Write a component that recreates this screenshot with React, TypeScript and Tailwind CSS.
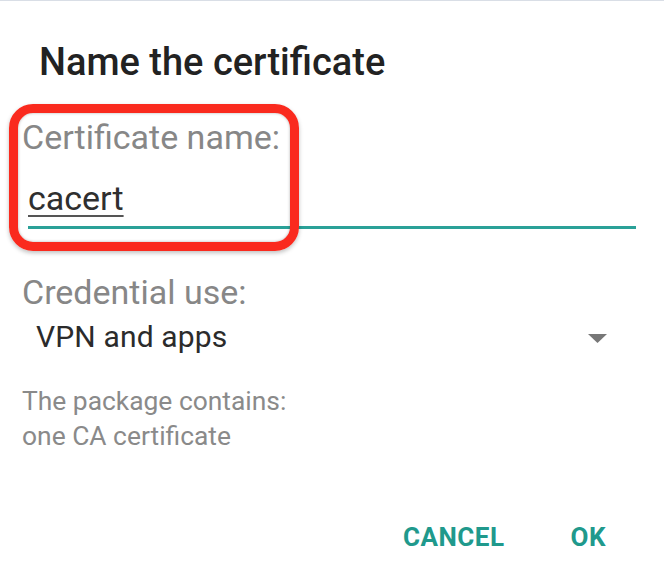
import React from "react";

export default function App() {
  return (
    <div className="relative w-[664px] h-[582px] bg-white border-t border-[#d9dee6] font-['Roboto',_'Noto_Sans',_sans-serif] overflow-hidden">
      <div className="pt-[39px] pl-[39px] text-[38px] leading-[45px] font-medium text-[#222222]">
        Name the certificate
      </div>
      <div className="mt-[32px] pl-[22px] text-[34px] leading-[40px] text-[#878787]">
        Certificate name:
      </div>
      <div className="mt-[21px] pl-[28px] text-[34px] leading-[40px] text-[#2f2f2f] underline decoration-[2px] underline-offset-[5px] decoration-[#555555]">
        cacert
      </div>
      <div className="mt-[8px] ml-[28px] w-[608px] h-[3px] bg-[#2aa198]" />
      <div className="mt-[43px] pl-[22px] text-[34px] leading-[40px] text-[#878787]">
        Credential use:
      </div>
      <div className="mt-[7px] pl-[36px] pr-[57px] flex items-center justify-between text-[30px] leading-[36px] text-[#2b2b2b]">
        <span className="tracking-[0.15px]">VPN and apps</span>
        <svg width="19" height="9" viewBox="0 0 19 9" className="mt-[2px]">
          <polygon points="0,0 19,0 9.5,9" fill="#777777" />
        </svg>
      </div>
      <div className="mt-[29px] pl-[22px] text-[26.4px] leading-[35px] text-[#8a8a8a]">
        <div>The package contains:</div>
        <div>one CA certificate</div>
      </div>
      <div className="mt-[68px] pr-[58px] flex justify-end gap-[66px] text-[26px] leading-[30px] font-bold tracking-[0.5px] text-[#20998c]">
        <span>CANCEL</span>
        <span>OK</span>
      </div>
      <div className="absolute left-[9px] top-[103px] w-[290px] h-[147px] rounded-[24px] border-[9px] border-[#fa2a1e] shadow-[0_2px_4px_rgba(0,0,0,0.25),inset_0_0_3px_rgba(0,0,0,0.3)]" />
    </div>
  );
}
